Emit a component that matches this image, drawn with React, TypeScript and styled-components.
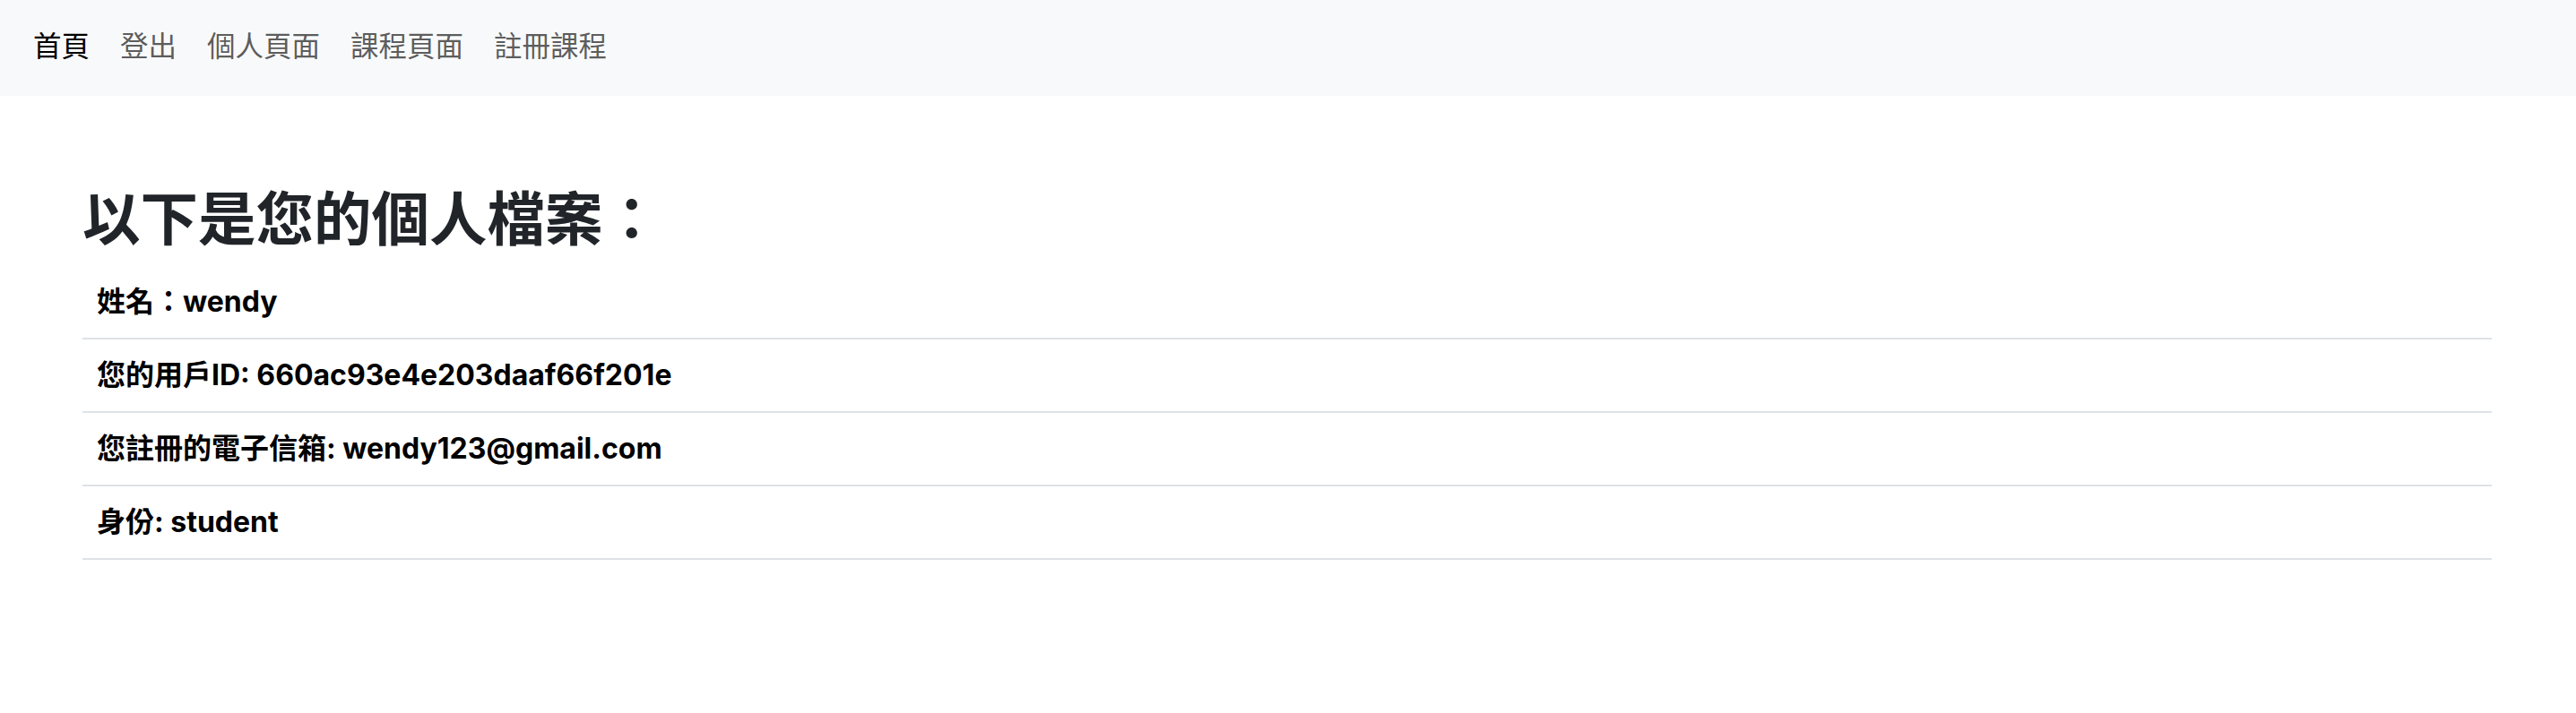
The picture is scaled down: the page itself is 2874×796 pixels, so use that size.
import React from "react";
import styled, { createGlobalStyle } from "styled-components";

const GlobalStyle = createGlobalStyle`
  html, body {
    margin: 0;
    padding: 0;
    background: #ffffff;
  }
  body {
    font-family: Inter, "Noto Sans CJK TC", sans-serif;
    color: #212529;
  }
`;

const NavBar = styled.nav`
  display: flex;
  align-items: center;
  height: 107px;
  padding: 0 20px 9px;
  background: #f8f9fa;
  box-sizing: border-box;
`;

const NavList = styled.ul`
  display: flex;
  align-items: center;
  list-style: none;
  margin: 0;
  padding: 0;
`;

const NavLink = styled.a<{ $active?: boolean }>`
  display: block;
  padding: 0 17px;
  font-family: "Noto Sans CJK TC", sans-serif;
  font-size: 31.5px;
  line-height: 48px;
  font-weight: 400;
  text-decoration: none;
  color: ${(p) => (p.$active ? "#000000" : "rgba(0, 0, 0, 0.65)")};
  cursor: pointer;
`;

const Main = styled.main`
  padding: 0 94px 0 92px;
`;

const Title = styled.h1`
  margin: 95px 0 18px;
  font-family: "Noto Sans CJK TC", sans-serif;
  font-size: 64.5px;
  line-height: 1.2;
  font-weight: 700;
  color: #212529;
`;

const InfoTable = styled.div`
  display: flex;
  flex-direction: column;
`;

const InfoRow = styled.div`
  padding: 16px 16px;
  line-height: 48px;
  font-size: 32px;
  font-weight: 700;
  color: #000000;
  border-bottom: 2px solid #dee2e6;
`;

const links = ["首頁", "登出", "個人頁面", "課程頁面", "註冊課程"];

const rows = [
  "姓名：wendy",
  "您的用戶ID: 660ac93e4e203daaf66f201e",
  "您註冊的電子信箱: wendy123@gmail.com",
  "身份: student",
];

export default function App() {
  return (
    <>
      <GlobalStyle />
      <NavBar>
        <NavList>
          {links.map((l, i) => (
            <li key={l}>
              <NavLink $active={i === 0}>{l}</NavLink>
            </li>
          ))}
        </NavList>
      </NavBar>
      <Main>
        <Title>以下是您的個人檔案：</Title>
        <InfoTable>
          {rows.map((r) => (
            <InfoRow key={r}>{r}</InfoRow>
          ))}
        </InfoTable>
      </Main>
    </>
  );
}
